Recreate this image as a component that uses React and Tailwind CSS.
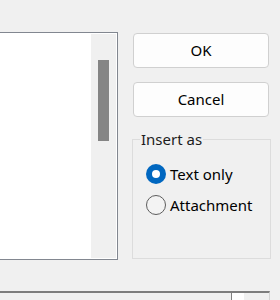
import React from "react";

export default function App() {
  return (
    <div className="w-[280px] h-[300px] bg-[#f0f0f0] overflow-hidden flex flex-col font-['Segoe_UI','Noto_Sans',sans-serif] text-[15px] text-black">
      <div className="flex mt-[32px] h-[228px]">
        <div className="w-[118px] h-full border border-l-0 border-[#828790] bg-white p-[1px] flex justify-end">
          <div className="w-[25px] h-full bg-[#f0f0f0] pt-[26px] pl-[7px]">
            <div className="w-[11px] h-[81px] bg-[#858585]" />
          </div>
        </div>
        <div className="ml-[15px] w-[136px] flex flex-col">
          <button className="mt-[1px] h-[35px] w-full rounded-[4px] border border-[#d0d0d0] bg-[#fdfdfd] flex items-center justify-center leading-none">
            OK
          </button>
          <button className="mt-[14px] h-[35px] w-full rounded-[4px] border border-[#d0d0d0] bg-[#fdfdfd] flex items-center justify-center leading-none">
            Cancel
          </button>
          <fieldset className="mt-[12px] -ml-[1px] w-[139px] h-[130px] border border-[#dcdcdc] m-0 p-0">
            <legend className="ml-[7px] px-[1px] leading-[20px] text-[#1c1c1c]">Insert as</legend>
            <div className="mt-[15px] pl-[13px] flex flex-col gap-[11px]">
              <div className="flex items-center h-[20px]">
                <div className="w-[20px] h-[20px] rounded-full bg-[#0067c0] flex items-center justify-center">
                  <div className="w-[8px] h-[8px] rounded-full bg-white" />
                </div>
                <span className="ml-[4px]">Text only</span>
              </div>
              <div className="flex items-center h-[20px]">
                <div className="w-[20px] h-[20px] rounded-full border border-[#5d5d5d] bg-[#f3f3f3]" />
                <span className="ml-[4px]">Attachment</span>
              </div>
            </div>
          </fieldset>
        </div>
      </div>
      <div className="mt-[31px] w-[270px] flex-1 border-t-2 border-[#7d7d7d] border-r border-r-[#d4d4d4] flex">
        <div className="w-[231px] h-full" />
        <div className="w-[1px] h-full bg-[#808080]" />
        <div className="w-[12px] h-full bg-white" />
        <div className="flex-1 h-full" />
      </div>
    </div>
  );
}
